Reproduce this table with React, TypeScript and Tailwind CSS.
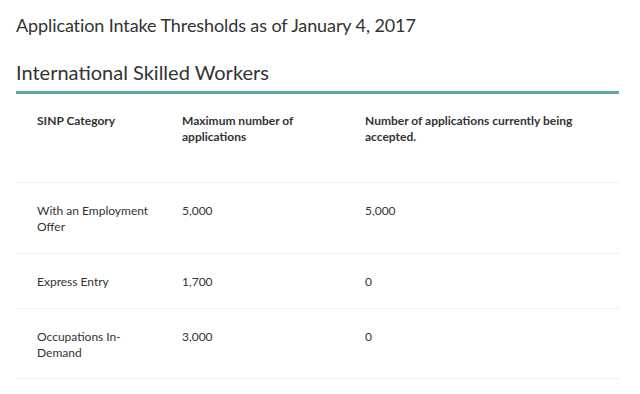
import React from 'react';

interface Row {
    category: string;
    max: string;
    current: string;
    height: string;
}

const rows: Row[] = [
    { category: 'With an Employment Offer', max: '5,000', current: '5,000', height: 'h-[71px]' },
    { category: 'Express Entry', max: '1,700', current: '0', height: 'h-[55px]' },
    { category: 'Occupations In-Demand', max: '3,000', current: '0', height: 'h-[70px]' },
];

const App: React.FC = () => {
    return (
        <div className="w-[640px] h-[394px] bg-white text-[#333] overflow-hidden" style={{ fontFamily: 'Lato, "Open Sans", sans-serif' }}>
            <div className="px-4 pt-[13px]">
                <h1 className="text-[18px] leading-[24px] tracking-[-0.1px] font-normal">Application Intake Thresholds as of January 4, 2017</h1>
                <h2 className="mt-[23px] text-[20px] leading-[25px] font-normal">International Skilled Workers</h2>
                <div className="mt-[6px] h-[3px] w-[603px] bg-[#5ba8a2]" />
                <div className="w-[603px] text-[12px] leading-[16px]">
                    <div className="grid grid-cols-[145px_183px_1fr] pl-[21px] pt-[19px] h-[89px] border-b border-[#f0f0f0] font-bold">
                        <div>SINP Category</div>
                        <div className="pr-4">Maximum number of applications</div>
                        <div className="pr-6">Number of applications currently being accepted.</div>
                    </div>
                    {rows.map((r, i) => (
                        <div key={i} className={`grid grid-cols-[145px_183px_1fr] pl-[21px] pt-[20px] border-b border-[#f0f0f0] ${r.height}`}>
                            <div className="pr-6">{r.category}</div>
                            <div>{r.max}</div>
                            <div>{r.current}</div>
                        </div>
                    ))}
                </div>
            </div>
        </div>
    );
};

export default App;
